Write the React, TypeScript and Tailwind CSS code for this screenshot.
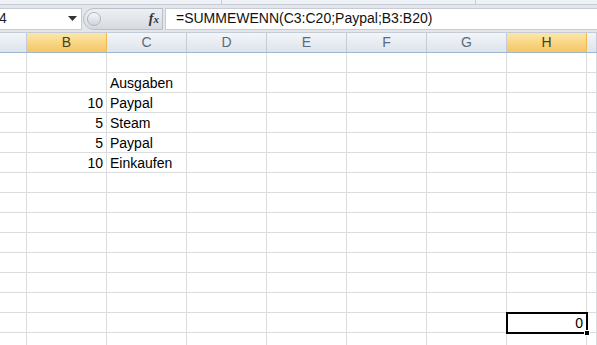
import React from "react";

// Column widths as shown (A is cut off on the left, last column is partial)
const cols = [
  { key: "A", w: "w-[27px]", label: "" },
  { key: "B", w: "w-[80px]", label: "B" },
  { key: "C", w: "w-[80px]", label: "C" },
  { key: "D", w: "w-[80px]", label: "D" },
  { key: "E", w: "w-[80px]", label: "E" },
  { key: "F", w: "w-[80px]", label: "F" },
  { key: "G", w: "w-[80px]", label: "G" },
  { key: "H", w: "w-[80px]", label: "H" },
  { key: "I", w: "flex-1", label: "" },
];

const highlighted = ["B", "H"];

// row index -> cell values
const data: Record<number, Record<string, string>> = {
  1: { C: "Ausgaben" },
  2: { B: "10", C: "Paypal" },
  3: { B: "5", C: "Steam" },
  4: { B: "5", C: "Paypal" },
  5: { B: "10", C: "Einkaufen" },
  13: { H: "0" },
};

const numeric = ["B", "H"];

export default function App() {
  const rows = Array.from({ length: 15 }, (_, i) => i);

  return (
    <div className="w-[597px] h-[345px] overflow-hidden bg-white font-['Liberation_Sans',Arial,sans-serif] text-[13px] text-black flex flex-col">
      {/* ribbon bottom edge */}
      <div className="h-[5px] flex bg-[#eef1f5] border-b border-[#c5cad3] shrink-0">
        <div className="w-[222px] border-r border-[#c8cdd5]" />
        <div className="w-[254px] border-r border-[#c8cdd5]" />
        <div className="flex-1" />
      </div>

      {/* formula bar */}
      <div className="h-[28px] bg-[#e3e7ec] flex items-center shrink-0 border-b border-[#c6ccd5]">
        <div className="w-[82px] h-[22px] bg-white flex items-center justify-between pr-[4px] border-y border-r border-[#c7ccd4]">
          <span className="ml-[-1px] text-[14px] text-[#222]">4</span>
          <svg width="9" height="5" viewBox="0 0 9 5">
            <path d="M0 0 L9 0 L4.5 5 Z" fill="#333" />
          </svg>
        </div>
        <div className="w-[83px] h-[22px] flex items-center relative">
          <div className="absolute left-[1px] top-0 w-[80px] h-[22px] rounded-l-full bg-gradient-to-b from-[#eef0f3] to-[#d6dae0] border border-[#b9bfc8]" />
          <div className="relative ml-[5px] w-[14px] h-[14px] rounded-full bg-gradient-to-b from-[#f7f8fa] to-[#cfd4db] border border-[#b0b6bf]" />
          <span className="relative ml-auto mr-[6px] font-['Liberation_Serif',serif] italic font-bold text-[14px] text-[#333]">
            f<span className="text-[11px]">x</span>
          </span>
        </div>
        <div className="flex-1 h-[22px] bg-white border-y border-l border-[#c7ccd4] flex items-center pl-[10px] text-[14px] text-[#111]">
          =SUMMEWENN(C3:C20;Paypal;B3:B20)
        </div>
      </div>

      {/* column headers */}
      <div className="h-[20px] flex shrink-0 border-b border-[#9eb6ce]">
        {cols.map((c) => (
          <div
            key={c.key}
            className={`${c.w} h-full flex items-center justify-center border-r text-[14px] ${
              highlighted.includes(c.key)
                ? "bg-gradient-to-b from-[#fbe7a9] to-[#f5c65f] border-[#f2b94e] text-[#4b4020]"
                : "bg-gradient-to-b from-[#f2f5f9] to-[#dee4ec] border-[#c3ccd8] text-[#5a6b80]"
            }`}
          >
            {c.label}
          </div>
        ))}
      </div>

      {/* grid */}
      <div className="flex flex-col relative">
        {rows.map((r) => (
          <div key={r} className="h-[20px] flex shrink-0">
            {cols.map((c) => {
              const v = data[r]?.[c.key] ?? "";
              return (
                <div
                  key={c.key}
                  className={`${c.w} h-full border-r border-b border-[#dadcdd] flex items-center pt-[2px] px-[3px] text-[14px] ${
                    numeric.includes(c.key) ? "justify-end" : "justify-start"
                  }`}
                >
                  {v}
                </div>
              );
            })}
          </div>
        ))}
        {/* active cell H14 */}
        <div className="absolute left-[506px] top-[259px] w-[82px] h-[22px] border-2 border-black pointer-events-none" />
        <div className="absolute left-[584px] top-[277px] w-[6px] h-[6px] bg-black border border-white pointer-events-none" />
      </div>
    </div>
  );
}
